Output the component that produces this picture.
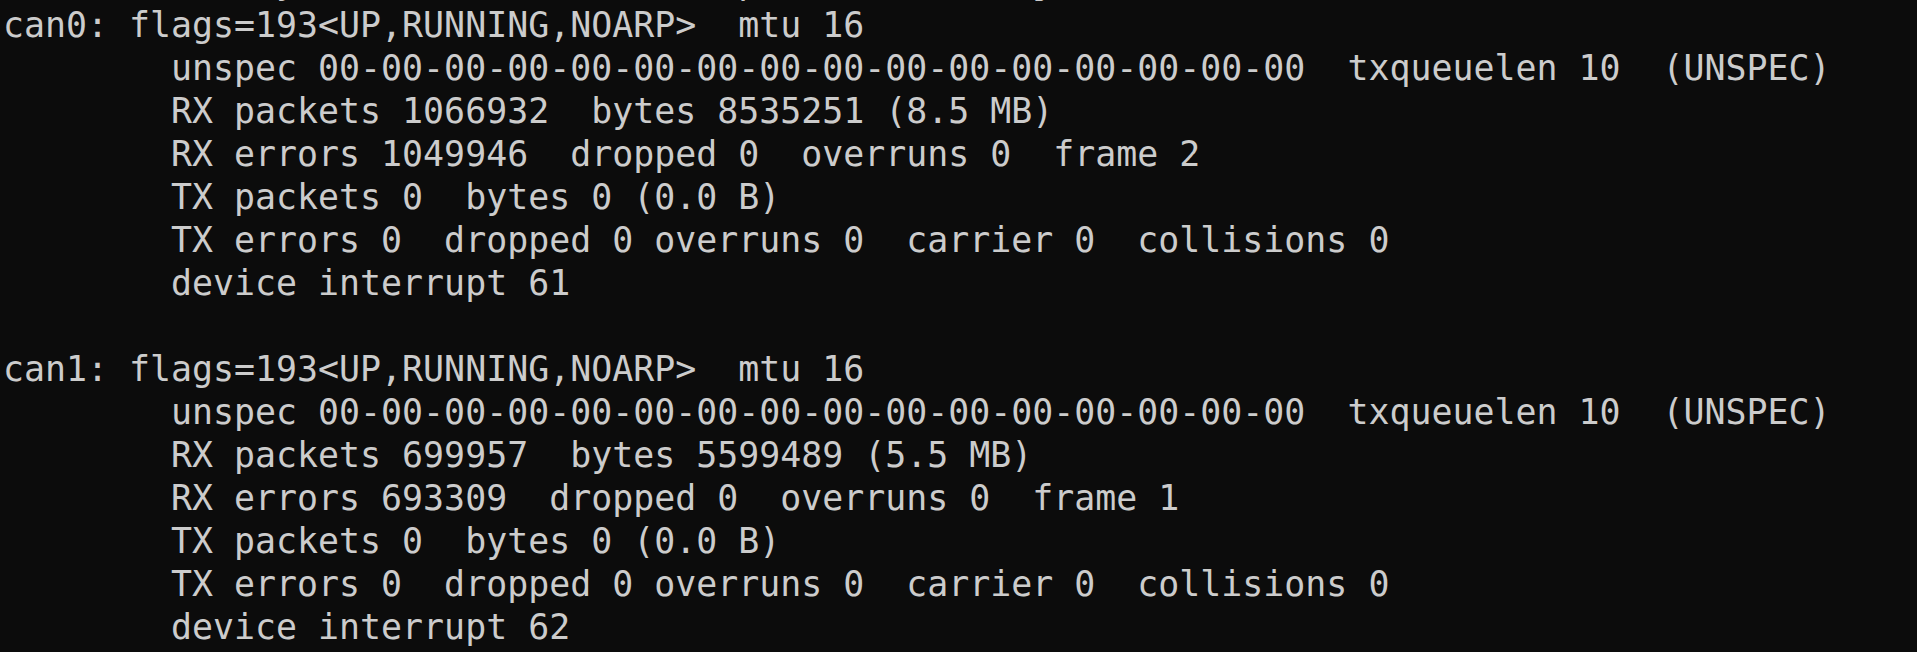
import React from "react";

const top = "             y             ,       p             j";

const lines: string[] = [
  "can0: flags=193<UP,RUNNING,NOARP>  mtu 16",
  "        unspec 00-00-00-00-00-00-00-00-00-00-00-00-00-00-00-00  txqueuelen 10  (UNSPEC)",
  "        RX packets 1066932  bytes 8535251 (8.5 MB)",
  "        RX errors 1049946  dropped 0  overruns 0  frame 2",
  "        TX packets 0  bytes 0 (0.0 B)",
  "        TX errors 0  dropped 0 overruns 0  carrier 0  collisions 0",
  "        device interrupt 61",
  "",
  "can1: flags=193<UP,RUNNING,NOARP>  mtu 16",
  "        unspec 00-00-00-00-00-00-00-00-00-00-00-00-00-00-00-00  txqueuelen 10  (UNSPEC)",
  "        RX packets 699957  bytes 5599489 (5.5 MB)",
  "        RX errors 693309  dropped 0  overruns 0  frame 1",
  "        TX packets 0  bytes 0 (0.0 B)",
  "        TX errors 0  dropped 0 overruns 0  carrier 0  collisions 0",
  "        device interrupt 62",
];

export default function App() {
  return (
    <div className="w-[1917px] h-[652px] overflow-hidden bg-[#0c0c0c]">
      <div
        className="-mt-[39px] pl-[3px] text-[#cccccc] text-[34.9px] leading-[43px] whitespace-pre"
        style={{ fontFamily: '"DejaVu Sans Mono", "Liberation Mono", monospace' }}
      >
        <div className="h-[43px]">{top}</div>
        {lines.map((l, i) => (
          <div key={i} className="h-[43px]">
            {l}
          </div>
        ))}
      </div>
    </div>
  );
}
